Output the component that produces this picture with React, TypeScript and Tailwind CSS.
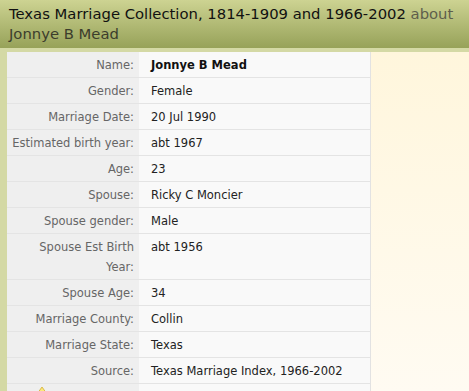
const rows: { label: string; value: string; bold?: boolean }[] = [
  { label: "Name:", value: "Jonnye B Mead", bold: true },
  { label: "Gender:", value: "Female" },
  { label: "Marriage Date:", value: "20 Jul 1990" },
  { label: "Estimated birth year:", value: "abt 1967" },
  { label: "Age:", value: "23" },
  { label: "Spouse:", value: "Ricky C Moncier" },
  { label: "Spouse gender:", value: "Male" },
  { label: "Spouse Est Birth Year:", value: "abt 1956" },
  { label: "Spouse Age:", value: "34" },
  { label: "Marriage County:", value: "Collin" },
  { label: "Marriage State:", value: "Texas" },
  { label: "Source:", value: "Texas Marriage Index, 1966-2002" },
];

export default function App() {
  return (
    <div className="w-[469px] h-[391px] overflow-hidden bg-white font-['DejaVu_Sans',Verdana,sans-serif]">
      {/* title bar */}
      <div className="h-[48px] px-[9px] pt-[4px] bg-gradient-to-b from-[#cdd392] to-[#97a259] text-[14.8px] leading-[20px] text-[#111]">
        Texas Marriage Collection, 1814-1909 and 1966-2002{" "}
        <span className="text-[#5e5e4c]">about</span>{" "}
        <span className="text-[#3c3d2c]">Jonnye B Mead</span>
      </div>

      <div className="h-[343px] border-l-[7px] border-t-[4px] border-[#d4d9a5] bg-gradient-to-b from-[#fff6dc] to-[#fffbf2]">
        <div className="w-[364px] border-r border-[#e2e2e2] text-[11.5px] leading-[20px]">
          {rows.map((r) => (
            <div key={r.label} className="flex border-b border-[#e4e4e4]">
              <div className="w-[132px] shrink-0 bg-[#efefef] pl-1 pr-[5px] pt-[3px] pb-[2px] text-right text-[#666]">
                {r.label}
              </div>
              <div
                className={`flex-1 bg-[#f9f9f9] pl-[12px] pt-[3px] pb-[2px] ${
                  r.bold ? "font-bold text-[#111]" : "text-[#222]"
                }`}
              >
                {r.value}
              </div>
            </div>
          ))}
          <div className="flex h-[26px]">
            <div className="w-[132px] shrink-0 bg-[#efefef] pl-[29px] pt-[1px]">
              <svg width="12" height="10" viewBox="0 0 12 10">
                <path d="M1 9 L6 2 L11 9 Z" fill="#fbe97a" stroke="#d9b94a" strokeWidth="1" />
              </svg>
            </div>
            <div className="flex-1 bg-[#f9f9f9]" />
          </div>
        </div>
      </div>
    </div>
  );
}
